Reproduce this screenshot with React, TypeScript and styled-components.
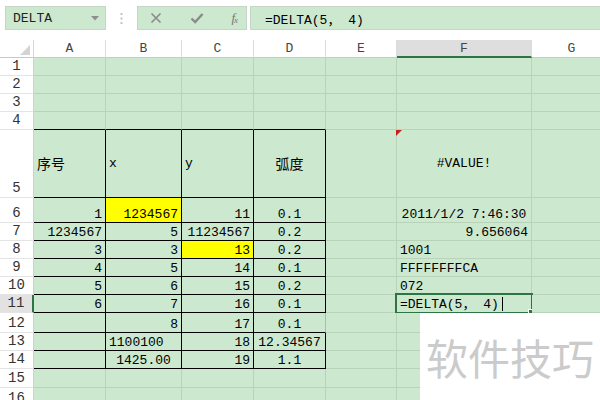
import React from 'react';
import styled, { createGlobalStyle, css } from 'styled-components';

const GREEN = '#cce8cf';
const GRID = '#b8d3ba';
const DARK = '#2e7545';
const MONO = '"Liberation Mono", "Noto Sans CJK SC", monospace';
const CJK = '"Noto Sans CJK SC", "Noto Sans", sans-serif';

const GlobalStyle = createGlobalStyle`
  html, body { margin: 0; padding: 0; background: #fff; }
  body { font-family: ${MONO}; color: #000; }
`;

type Align = 'left' | 'right' | 'center';

interface CellData {
  text?: string;
  align?: Align;
  yellow?: boolean;
  cjk?: boolean;
  flag?: boolean;
  mark?: boolean;
  editing?: boolean;
}

interface RowData {
  n: number;
  h: number;
  middle?: boolean;
  cells: Record<number, CellData>;
}

const COLS = ['A', 'B', 'C', 'D', 'E', 'F', 'G'];
const ACTIVE_COL = 5;
const ACTIVE_ROW = 11;

const r = (text: string): CellData => ({ text, align: 'right' });
const c = (text: string): CellData => ({ text, align: 'center' });
const l = (text: string): CellData => ({ text, align: 'left' });

const rows: RowData[] = [
  { n: 1, h: 18, cells: {} },
  { n: 2, h: 18, cells: {} },
  { n: 3, h: 18, cells: {} },
  { n: 4, h: 18, cells: {} },
  {
    n: 5, h: 68, middle: true,
    cells: {
      0: { text: '序号', align: 'left', cjk: true },
      1: l('x'),
      2: l('y'),
      3: { text: '弧度', align: 'center', cjk: true },
      5: { text: '#VALUE!', align: 'center', flag: true },
    },
  },
  {
    n: 6, h: 25,
    cells: { 0: r('1'), 1: { text: '1234567', align: 'right', yellow: true }, 2: r('11'), 3: c('0.1'), 5: c('2011/1/2 7:46:30') },
  },
  { n: 7, h: 18, cells: { 0: r('1234567'), 1: r('5'), 2: r('11234567'), 3: c('0.2'), 5: r('9.656064') } },
  { n: 8, h: 18, cells: { 0: r('3'), 1: r('3'), 2: { text: '13', align: 'right', yellow: true }, 3: c('0.2'), 5: l('1001') } },
  { n: 9, h: 18, cells: { 0: r('4'), 1: r('5'), 2: r('14'), 3: c('0.1'), 5: l('FFFFFFFFCA') } },
  { n: 10, h: 18, cells: { 0: r('5'), 1: r('6'), 2: r('15'), 3: c('0.2'), 5: l('072') } },
  { n: 11, h: 18, cells: { 0: r('6'), 1: r('7'), 2: r('16'), 3: c('0.1'), 5: { text: '=DELTA(5， 4)', align: 'left', editing: true } } },
  { n: 12, h: 20, cells: { 1: r('8'), 2: r('17'), 3: { text: '0.1', align: 'center', mark: true } } },
  { n: 13, h: 18, cells: { 1: l('1100100'), 2: r('18'), 3: c('12.34567') } },
  { n: 14, h: 18, cells: { 1: c('1425.00'), 2: r('19'), 3: c('1.1') } },
  { n: 15, h: 19, cells: {} },
  { n: 16, h: 20, cells: {} },
];

const inTable = (row: number, col: number) => row >= 5 && row <= 14 && col <= 3;

const Page = styled.div`
  position: relative;
  width: 600px;
  height: 400px;
  overflow: hidden;
  background: #fff;
`;

const FormulaBar = styled.div`
  display: flex;
  align-items: flex-start;
  height: 40px;
  padding: 6px 0 0 5px;
  box-sizing: border-box;
`;

const FieldBox = styled.div`
  height: 24px;
  box-sizing: border-box;
  background: ${GREEN};
  border: 1px solid #c4d6c5;
  display: flex;
  align-items: center;
`;

const NameBox = styled(FieldBox)`
  width: 101px;
  padding: 0 6px 0 7px;
  justify-content: space-between;
  font-size: 13px;
  color: #222;
`;

const Divider = styled.div`
  width: 31px;
  height: 24px;
  display: flex;
  align-items: center;
  justify-content: center;
`;

const ButtonGroup = styled(FieldBox)`
  width: 110px;
  padding: 0 9px 0 12px;
  justify-content: space-between;
`;

const Fx = styled.span`
  font-family: "Liberation Serif", serif;
  font-style: italic;
  font-size: 13px;
  color: #777;
  letter-spacing: -1px;
  & sub { font-size: 9px; vertical-align: -1px; }
`;

const FormulaInput = styled(FieldBox)`
  flex: 1;
  margin-left: 3px;
  border-right: none;
  padding-left: 14px;
  font-size: 13px;
  white-space: pre;
`;

const Sheet = styled.div<{ $rows: string }>`
  display: grid;
  grid-template-columns: 34px 72px 76px 72px 72px 71px 135px 80px;
  grid-template-rows: 18px ${({ $rows }) => $rows};
`;

const Corner = styled.div`
  position: relative;
  box-sizing: border-box;
  border-right: 1px solid #d6d6d6;
  border-bottom: 1px solid #c8c8c8;
  &::after {
    content: '';
    position: absolute;
    right: 3px;
    bottom: 2px;
    border-style: solid;
    border-width: 0 0 10px 10px;
    border-color: transparent transparent #d4d4d4 transparent;
  }
`;

const ColHead = styled.div<{ $active?: boolean }>`
  box-sizing: border-box;
  display: flex;
  align-items: center;
  justify-content: center;
  font-size: 13px;
  color: #444;
  border-right: 1px solid #dcdcdc;
  border-bottom: 1px solid #c8c8c8;
  ${({ $active }) =>
    $active &&
    css`
      background: #dedede;
      border-bottom: 2px solid ${DARK};
    `}
`;

const RowHead = styled.div<{ $active?: boolean }>`
  box-sizing: border-box;
  display: flex;
  align-items: flex-end;
  justify-content: center;
  padding-bottom: 1px;
  font-size: 14px;
  line-height: 15px;
  color: #333;
  border-right: 1px solid #cfcfcf;
  border-bottom: 1px solid #e4e4e4;
  ${({ $active }) =>
    $active &&
    css`
      background: #e2e2e2;
      border-right: 2px solid ${DARK};
    `}
`;

const Cell = styled.div<{
  $align: Align;
  $middle?: boolean;
  $yellow?: boolean;
  $right: string;
  $bottom: string;
  $cjk?: boolean;
}>`
  position: relative;
  box-sizing: border-box;
  display: flex;
  align-items: ${({ $middle }) => ($middle ? 'center' : 'flex-end')};
  justify-content: ${({ $align }) =>
    $align === 'left' ? 'flex-start' : $align === 'right' ? 'flex-end' : 'center'};
  padding: 0 3px 0 3px;
  background: ${({ $yellow }) => ($yellow ? '#ffff00' : GREEN)};
  border-right: 1px solid ${({ $right }) => $right};
  border-bottom: 1px solid ${({ $bottom }) => $bottom};
  font-family: ${({ $cjk }) => ($cjk ? CJK : MONO)};
  font-size: ${({ $cjk }) => ($cjk ? '14px' : '13px')};
  line-height: 15px;
  white-space: pre;
`;

const Flag = styled.span`
  position: absolute;
  top: 0;
  left: -1px;
  border-style: solid;
  border-width: 6px 6px 0 0;
  border-color: #c81e1e transparent transparent transparent;
`;

const Selection = styled.span`
  position: absolute;
  top: -2px;
  left: -2px;
  right: -2px;
  bottom: -2px;
  border: 2px solid ${DARK};
  pointer-events: none;
`;

const FillHandle = styled.span`
  position: absolute;
  right: -4px;
  bottom: -4px;
  width: 5px;
  height: 5px;
  background: ${DARK};
  border: 1px solid #fff;
`;

const Caret = styled.span`
  display: inline-block;
  width: 1px;
  height: 14px;
  margin-left: 3px;
  margin-bottom: 1px;
  background: #000;
`;

const Watermark = styled.div`
  position: absolute;
  left: 420px;
  top: 313px;
  width: 180px;
  height: 87px;
  background: #fff;
  display: flex;
  align-items: center;
  padding-left: 6px;
  box-sizing: border-box;
  font-family: ${CJK};
  font-size: 42px;
  color: #cbcbcb;
  letter-spacing: 0;
`;

const CrossIcon = () => (
  <svg width="12" height="12" viewBox="0 0 12 12">
    <path d="M1.5 1.5 L10.5 10.5 M10.5 1.5 L1.5 10.5" stroke="#8a8a8a" strokeWidth="1.6" fill="none" />
  </svg>
);

const CheckIcon = () => (
  <svg width="14" height="12" viewBox="0 0 14 12">
    <path d="M1.5 6.5 L5.2 10 L12.5 2" stroke="#8a8a8a" strokeWidth="2.4" fill="none" />
  </svg>
);

const DropArrow = () => (
  <svg width="8" height="5" viewBox="0 0 8 5">
    <path d="M0 0 H8 L4 4.5 Z" fill="#8f8f8f" />
  </svg>
);

const Dots = () => (
  <svg width="3" height="11" viewBox="0 0 3 11">
    <rect x="0.5" y="0" width="2" height="2" fill="#c4c4c4" />
    <rect x="0.5" y="4.5" width="2" height="2" fill="#c4c4c4" />
    <rect x="0.5" y="9" width="2" height="2" fill="#c4c4c4" />
  </svg>
);

export default function App() {
  const rowTemplate = rows.map((row) => `${row.h}px`).join(' ');

  return (
    <Page>
      <GlobalStyle />
      <FormulaBar>
        <NameBox>
          <span>DELTA</span>
          <DropArrow />
        </NameBox>
        <Divider>
          <Dots />
        </Divider>
        <ButtonGroup>
          <CrossIcon />
          <CheckIcon />
          <Fx>
            f<sub>x</sub>
          </Fx>
        </ButtonGroup>
        <FormulaInput>=DELTA(5， 4)</FormulaInput>
      </FormulaBar>

      <Sheet $rows={rowTemplate}>
        <Corner />
        {COLS.map((name, i) => (
          <ColHead key={name} $active={i === ACTIVE_COL}>
            {name}
          </ColHead>
        ))}

        {rows.map((row) => (
          <React.Fragment key={row.n}>
            <RowHead $active={row.n === ACTIVE_ROW}>{row.n}</RowHead>
            {COLS.map((_, col) => {
              const cell = row.cells[col] || {};
              const table = inTable(row.n, col);
              const bottomBlack = table || (row.n === 4 && col <= 3);
              return (
                <Cell
                  key={col}
                  $align={cell.align || 'left'}
                  $middle={row.middle}
                  $yellow={cell.yellow}
                  $cjk={cell.cjk}
                  $right={cell.mark ? '#f2a07c' : table ? '#000' : GRID}
                  $bottom={bottomBlack ? '#000' : GRID}
                >
                  {cell.flag && <Flag />}
                  {cell.text}
                  {cell.editing && (
                    <>
                      <Caret />
                      <Selection>
                        <FillHandle />
                      </Selection>
                    </>
                  )}
                </Cell>
              );
            })}
          </React.Fragment>
        ))}
      </Sheet>

      <Watermark>软件技巧</Watermark>
    </Page>
  );
}
